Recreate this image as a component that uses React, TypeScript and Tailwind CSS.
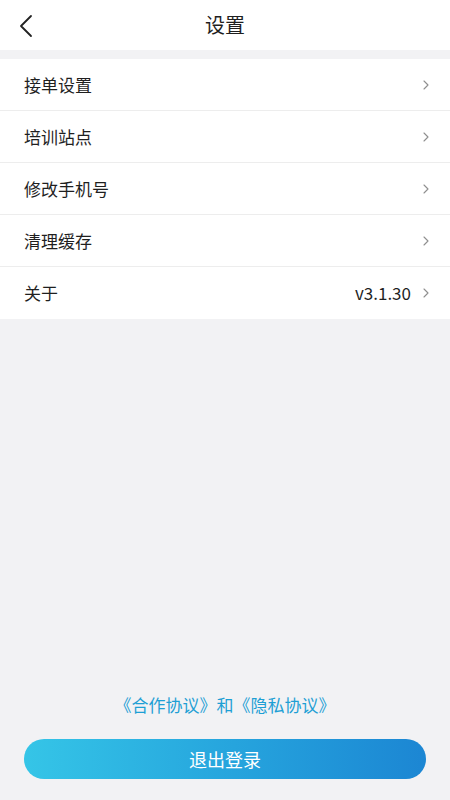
import React from 'react';

const items = [
  { label: '接单设置' },
  { label: '培训站点' },
  { label: '修改手机号' },
  { label: '清理缓存' },
  { label: '关于', value: 'v3.1.30' },
];

const Chevron: React.FC = () => (
  <svg width="8" height="12" viewBox="0 0 8 12" fill="none">
    <path d="M2 2 L6 6 L2 10" stroke="#8f8f8f" strokeWidth="1.1" strokeLinecap="round" strokeLinejoin="round" />
  </svg>
);

const App: React.FC = () => {
  return (
    <div
      className="w-[450px] h-[800px] bg-[#f2f2f4] flex flex-col text-[#1f1f1f]"
      style={{ fontFamily: '"Noto Sans CJK SC", "Noto Sans", sans-serif' }}
    >
      {/* header */}
      <div className="h-[50px] bg-white flex items-center relative">
        <div className="absolute left-[18px] top-[14px]">
          <svg width="16" height="24" viewBox="0 0 16 24" fill="none">
            <path d="M13 2 L3 12 L13 22" stroke="#222" strokeWidth="1.8" strokeLinecap="round" strokeLinejoin="round" />
          </svg>
        </div>
        <div className="flex-1 text-center text-[20px]">设置</div>
      </div>

      <div className="mt-[9px] bg-white">
        {items.map((item, i) => (
          <div
            key={item.label}
            className={`h-[52px] flex items-center pl-[24px] pr-[20px] ${i < items.length - 1 ? 'border-b border-[#ededed]' : ''}`}
          >
            <span className="flex-1 text-[17px]">{item.label}</span>
            {item.value && <span className="text-[17px] mr-[11px]">{item.value}</span>}
            <Chevron />
          </div>
        ))}
      </div>

      <div className="flex-1" />

      <div className="text-center text-[17px] text-[#1e9fd4] mb-[22px]">
        《合作协议》和《隐私协议》
      </div>

      <div className="px-[24px] mb-[21px]">
        <div className="h-[40px] rounded-full bg-gradient-to-r from-[#35c5e7] to-[#1c86d3] flex items-center justify-center text-white text-[18px]">
          退出登录
        </div>
      </div>
    </div>
  );
};

export default App;
